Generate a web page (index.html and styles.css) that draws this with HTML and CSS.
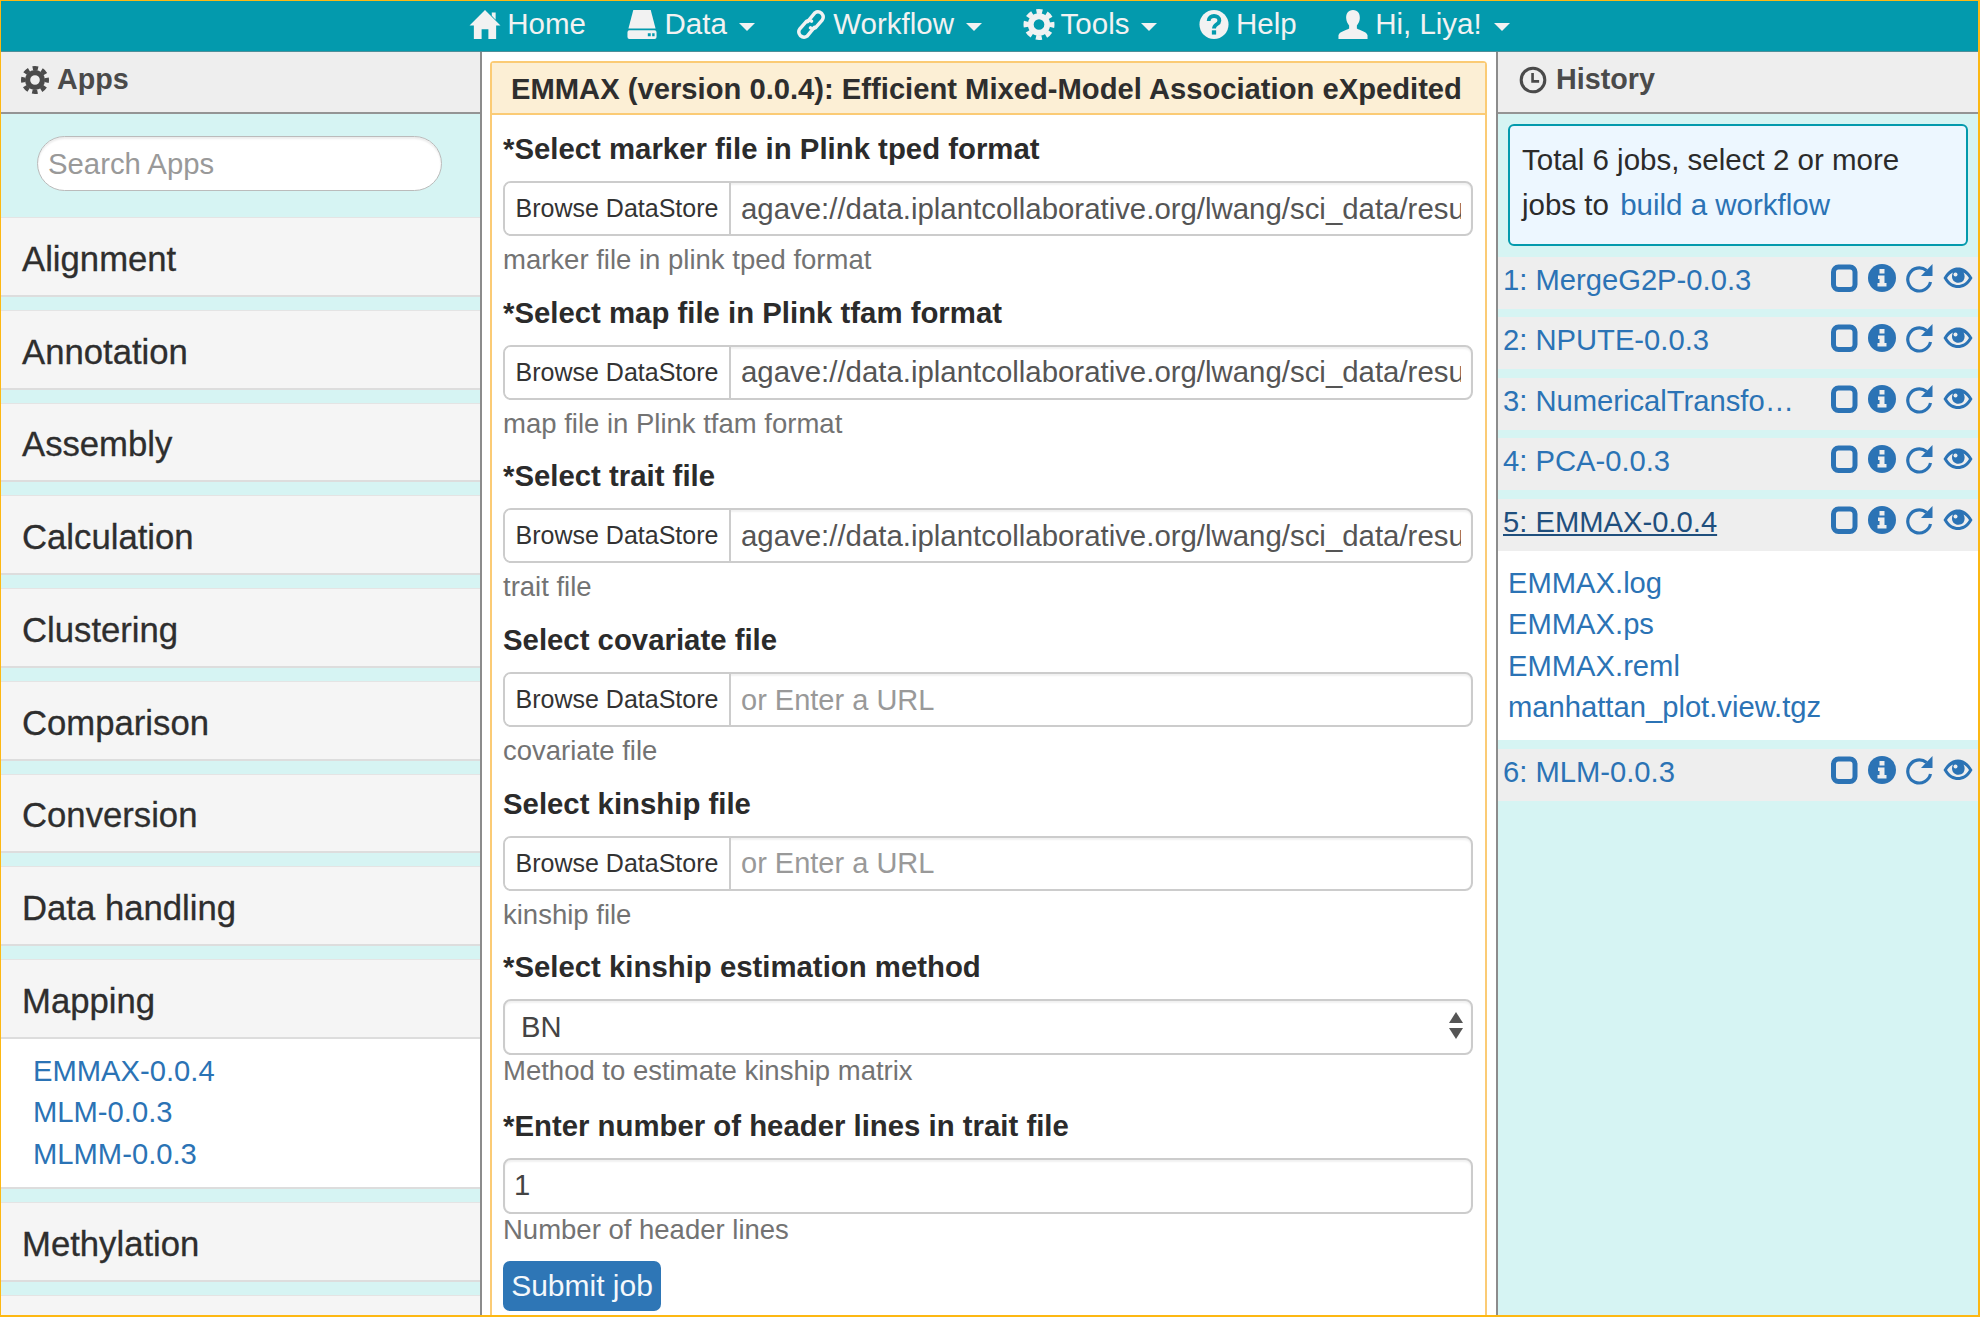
FILE: index.html
```html
<!DOCTYPE html>
<html lang="en">

<head>
    <meta charset="UTF-8">
    <title>EMMAX</title>
    <link rel="stylesheet" href="styles.css">
</head>

<body>
    <svg class="sprite" xmlns="http://www.w3.org/2000/svg">
        <symbol id="i-home" viewBox="0 0 32 32">
            <path d="M16 1 L32 17 H27.500 V31 H19.500 V21 H12.500 V31 H4.500 V17 H0 Z M23 3.500 H27 V11 L23 7 Z" fill="currentColor" />
        </symbol>
        <symbol id="i-hdd" viewBox="0 0 32 32">
            <path d="M7 1 H25 L30 20 H2 Z" fill="currentColor" />
            <path fill-rule="evenodd" fill="currentColor" d="M3 22 H29 Q31 22 31 24 V29 Q31 31 29 31 H3 Q1 31 1 29 V24 Q1 22 3 22 Z M22 25 V28 H25 V25 Z M26.500 25 V28 H29 V25 Z" />
        </symbol>
        <symbol id="i-link" viewBox="0 0 32 32">
            <g fill="none" stroke="currentColor" stroke-width="3.500" stroke-linecap="round">
                <path d="M12.500 13 L20 4 Q23.500 1.500 27 4.500 Q30 8 27.500 11.500 L20.500 19.500 Q18 21 15.500 19.500" />
                <path d="M19.500 19 L12 28 Q8.500 30.500 5 27.500 Q2 24 4.500 20.500 L11.500 12.500 Q14 11 16.500 12.500" />
            </g>
        </symbol>
        <symbol id="i-cog" viewBox="0 0 32 32">
            <circle cx="16" cy="16" r="13.500" fill="none" stroke="currentColor" stroke-width="5" stroke-dasharray="6.100 4.500" stroke-dashoffset="3.050" />
            <circle cx="16" cy="16" r="8.500" fill="none" stroke="currentColor" stroke-width="6" />
        </symbol>
        <symbol id="i-question" viewBox="0 0 32 32">
            <circle cx="16" cy="16" r="15" fill="currentColor" />
            <path d="M10.500 12.500 C10.500 5.500 21.500 5.500 21.500 12 C21.500 16 16 15.500 16 20" fill="none" stroke="#039aad" stroke-width="4" />
            <rect x="13.800" y="22" width="4.400" height="4.400" fill="#039aad" />
        </symbol>
        <symbol id="i-user" viewBox="0 0 32 32">
            <path d="M16 1 C21 1 23.500 5 23 10 C22.700 13 21.500 15 20 17 V20 C23 22 30 23 31 27 V31 H1 V27 C2 23 9 22 12 20 V17 C10.500 15 9.300 13 9 10 C8.500 5 11 1 16 1 Z" fill="currentColor" />
        </symbol>
        <symbol id="i-clock" viewBox="0 0 32 32">
            <circle cx="16" cy="16" r="13.500" fill="none" stroke="currentColor" stroke-width="3.500" />
            <path d="M15.500 8 V17.500 H23" fill="none" stroke="currentColor" stroke-width="3" />
        </symbol>
        <symbol id="i-square" viewBox="0 0 30 30">
            <rect x="4.500" y="4" width="21.500" height="22.500" rx="5" fill="none" stroke="currentColor" stroke-width="5" />
        </symbol>
        <symbol id="i-info" viewBox="0 0 30 30">
            <circle cx="15" cy="15" r="14" fill="currentColor" />
            <path d="M12.500 6 H17.500 V10.500 H12.500 Z M11 12.500 H17.500 V20 H19.500 V23.500 H10.500 V20 H12.500 V16 H11 Z" fill="#eee" />
        </symbol>
        <symbol id="i-repeat" viewBox="0 0 30 30">
            <path d="M25.500 19 A11.500 11.500 0 1 1 21.500 7.500" fill="none" stroke="currentColor" stroke-width="3.200" />
            <path d="M27.500 1 V13 H16 Z" fill="currentColor" />
        </symbol>
        <symbol id="i-eye" viewBox="0 0 30 30">
            <path fill-rule="evenodd" fill="currentColor" d="M0.500 15 C5 7 10 4.500 15 4.500 C20 4.500 25 7 29.500 15 C25 23 20 25 15 25 C10 25 5 23 0.500 15 Z M4 15 C7 20 11 22 15 22 C19 22 23 20 26 15 C24.500 12.500 22.500 10.500 20.500 9.500 C22 12 22 15 20.500 17.500 C18.500 20 14 20.500 11.500 18.500 C8.500 16.500 8.500 12 10 9.500 C7.500 10.500 5.500 12.500 4 15 Z" />
            <circle cx="12.500" cy="11.500" r="2" fill="#eee" />
        </symbol>
    </svg>

    <div class="frame">
        <nav class="navbar">
            <a class="nav-item"><svg class="nav-icon"><use href="#i-home" /></svg>Home</a>
            <a class="nav-item"><svg class="nav-icon"><use href="#i-hdd" /></svg>Data<span class="caret"></span></a>
            <a class="nav-item"><svg class="nav-icon"><use href="#i-link" /></svg>Workflow<span class="caret"></span></a>
            <a class="nav-item"><svg class="nav-icon"><use href="#i-cog" /></svg>Tools<span class="caret"></span></a>
            <a class="nav-item"><svg class="nav-icon"><use href="#i-question" /></svg>Help</a>
            <a class="nav-item"><svg class="nav-icon"><use href="#i-user" /></svg>Hi, Liya!<span class="caret"></span></a>
        </nav>

        <div class="columns">
            <aside class="apps">
                <h2 class="col-head"><svg class="head-icon"><use href="#i-cog" /></svg>Apps</h2>
                <div class="search-wrap">
                    <input class="search" type="text" placeholder="Search Apps">
                </div>
                <div class="panel">Alignment</div>
                <div class="panel">Annotation</div>
                <div class="panel">Assembly</div>
                <div class="panel">Calculation</div>
                <div class="panel">Clustering</div>
                <div class="panel">Comparison</div>
                <div class="panel">Conversion</div>
                <div class="panel">Data handling</div>
                <div class="panel panel-open">Mapping</div>
                <ul class="app-list">
                    <li><a>EMMAX-0.0.4</a></li>
                    <li><a>MLM-0.0.3</a></li>
                    <li><a>MLMM-0.0.3</a></li>
                </ul>
                <div class="panel">Methylation</div>
                <div class="panel"></div>
            </aside>

            <main class="center">
                <div class="job-panel">
                    <h1 class="job-title">EMMAX (version 0.0.4): Efficient Mixed-Model Association eXpedited</h1>
                    <form class="job-form">
                        <div class="field">
                            <label>*Select marker file in Plink tped format</label>
                            <div class="input-group">
                                <button type="button" class="browse">Browse DataStore</button>
                                <input type="text" value="agave://data.iplantcollaborative.org/lwang/sci_data/results/emmax/marker.tped">
                            </div>
                            <p class="help">marker file in plink tped format</p>
                        </div>
                        <div class="field">
                            <label>*Select map file in Plink tfam format</label>
                            <div class="input-group">
                                <button type="button" class="browse">Browse DataStore</button>
                                <input type="text" value="agave://data.iplantcollaborative.org/lwang/sci_data/results/emmax/marker.tfam">
                            </div>
                            <p class="help">map file in Plink tfam format</p>
                        </div>
                        <div class="field">
                            <label>*Select trait file</label>
                            <div class="input-group">
                                <button type="button" class="browse">Browse DataStore</button>
                                <input type="text" value="agave://data.iplantcollaborative.org/lwang/sci_data/results/emmax/trait.txt">
                            </div>
                            <p class="help">trait file</p>
                        </div>
                        <div class="field">
                            <label>Select covariate file</label>
                            <div class="input-group">
                                <button type="button" class="browse">Browse DataStore</button>
                                <input type="text" placeholder="or Enter a URL">
                            </div>
                            <p class="help">covariate file</p>
                        </div>
                        <div class="field">
                            <label>Select kinship file</label>
                            <div class="input-group">
                                <button type="button" class="browse">Browse DataStore</button>
                                <input type="text" placeholder="or Enter a URL">
                            </div>
                            <p class="help">kinship file</p>
                        </div>
                        <div class="field field-short">
                            <label>*Select kinship estimation method</label>
                            <div class="select-wrap">
                                <select class="control control-select">
                                    <option>BN</option>
                                </select>
                                <span class="arrows"></span>
                            </div>
                            <p class="help help-tight">Method to estimate kinship matrix</p>
                        </div>
                        <div class="field field-short">
                            <label>*Enter number of header lines in trait file</label>
                            <input class="control" type="text" value="1">
                            <p class="help help-tight">Number of header lines</p>
                        </div>
                        <button type="button" class="submit">Submit job</button>
                    </form>
                </div>
            </main>

            <aside class="history">
                <h2 class="col-head"><svg class="head-icon clock"><use href="#i-clock" /></svg>History</h2>
                <div class="notice">Total 6 jobs, select 2 or more<br>jobs to <a>build a workflow</a></div>

                <div class="job">
                    <a class="job-name">1: MergeG2P-0.0.3</a>
                    <div class="job-actions">
                        <svg><use href="#i-square" /></svg>
                        <svg><use href="#i-info" /></svg>
                        <svg><use href="#i-repeat" /></svg>
                        <svg><use href="#i-eye" /></svg>
                    </div>
                </div>
                <div class="job">
                    <a class="job-name">2: NPUTE-0.0.3</a>
                    <div class="job-actions">
                        <svg><use href="#i-square" /></svg>
                        <svg><use href="#i-info" /></svg>
                        <svg><use href="#i-repeat" /></svg>
                        <svg><use href="#i-eye" /></svg>
                    </div>
                </div>
                <div class="job">
                    <a class="job-name">3: NumericalTransfo…</a>
                    <div class="job-actions">
                        <svg><use href="#i-square" /></svg>
                        <svg><use href="#i-info" /></svg>
                        <svg><use href="#i-repeat" /></svg>
                        <svg><use href="#i-eye" /></svg>
                    </div>
                </div>
                <div class="job">
                    <a class="job-name">4: PCA-0.0.3</a>
                    <div class="job-actions">
                        <svg><use href="#i-square" /></svg>
                        <svg><use href="#i-info" /></svg>
                        <svg><use href="#i-repeat" /></svg>
                        <svg><use href="#i-eye" /></svg>
                    </div>
                </div>
                <div class="job job-open">
                    <a class="job-name active">5: EMMAX-0.0.4</a>
                    <div class="job-actions">
                        <svg><use href="#i-square" /></svg>
                        <svg><use href="#i-info" /></svg>
                        <svg><use href="#i-repeat" /></svg>
                        <svg><use href="#i-eye" /></svg>
                    </div>
                </div>
                <ul class="job-files">
                    <li><a>EMMAX.log</a></li>
                    <li><a>EMMAX.ps</a></li>
                    <li><a>EMMAX.reml</a></li>
                    <li><a>manhattan_plot.view.tgz</a></li>
                </ul>
                <div class="job">
                    <a class="job-name">6: MLM-0.0.3</a>
                    <div class="job-actions">
                        <svg><use href="#i-square" /></svg>
                        <svg><use href="#i-info" /></svg>
                        <svg><use href="#i-repeat" /></svg>
                        <svg><use href="#i-eye" /></svg>
                    </div>
                </div>
            </aside>
        </div>
    </div>
</body>

</html>
```

FILE: styles.css
```css
* {
    margin: 0;
    padding: 0;
    box-sizing: border-box;
}

html,
body {
    height: 1317px;
    overflow: hidden;
}

body {
    font-family: "Liberation Sans", Arial, sans-serif;
    font-size: 29.2px;
    color: #333;
    background: #fff;
}

a {
    color: #2b73b5;
}

ul {
    list-style: none;
}

.sprite {
    display: none;
}

.frame {
    height: 1317px;
    display: flex;
    flex-direction: column;
    border-style: solid;
    border-color: #fdb813;
    border-width: 1px 2px 2px 1px;
}

/* top bar */
.navbar {
    height: 51px;
    flex: none;
    display: flex;
    justify-content: center;
    align-items: center;
    gap: 40.5px;
    background: #039aad;
    border-bottom: 1px solid #4f8f99;
}

.nav-item {
    display: flex;
    align-items: center;
    color: #f2f2f2;
    font-size: 29.5px;
    padding-bottom: 4px;
}

.nav-icon {
    width: 32px;
    height: 31px;
    margin-right: 6px;
}

.caret {
    width: 0;
    height: 0;
    margin-left: 12px;
    margin-top: 5px;
    border-left: 8px solid transparent;
    border-right: 8px solid transparent;
    border-top: 8px solid #f2f2f2;
}

.columns {
    flex: 1;
    display: flex;
    min-height: 0;
}

/* side columns */
.apps,
.history {
    flex: none;
    height: 100%;
    overflow: hidden;
    background: #d6f4f3;
}

.apps {
    width: 481px;
    border-right: 2px solid #8c8c8c;
}

.history {
    width: 482px;
    border-left: 2px solid #8c8c8c;
}

.col-head {
    height: 62px;
    display: flex;
    align-items: center;
    padding: 0 0 5px 20px;
    background: #eee;
    border-bottom: 2px solid #949494;
    font-size: 28.7px;
    font-weight: bold;
    color: #4a4a4a;
}

.history .col-head {
    padding-left: 21px;
}

.head-icon {
    width: 28px;
    height: 28px;
    margin-right: 8px;
}

.clock {
    margin-right: 9px;
}

.search-wrap {
    height: 103px;
    padding: 22px 38px 0 36px;
}

.search {
    width: 100%;
    height: 55px;
    padding: 0 10px;
    border: 1px solid #bbb;
    border-radius: 28px;
    box-shadow: inset 0 2px 2px rgba(0, 0, 0, .08);
    font: inherit;
    font-size: 29.3px;
    outline: none;
}

.search::placeholder,
.input-group input::placeholder {
    color: #999;
    opacity: 1;
}

.input-group input::placeholder {
    font-size: 29px;
}

.panel {
    height: 79.75px;
    margin-bottom: 13px;
    display: flex;
    align-items: center;
    padding: 6px 0 0 21px;
    background: #f5f5f5;
    border-top: 1px solid #e4e4e4;
    border-bottom: 2px solid #ddd;
    font-size: 34.7px;
    color: #2e2e2e;
    -webkit-text-stroke: .3px #2e2e2e;
}

.panel-open {
    margin-bottom: 0;
}

.app-list {
    height: 150px;
    margin-bottom: 13px;
    padding: 12px 0 0 32px;
    background: #fff;
    border-bottom: 2px solid #ddd;
    line-height: 41.5px;
}

/* middle form */
.center {
    flex: 1;
    min-width: 0;
    height: 100%;
    padding: 9px 9px 0 8px;
    overflow: hidden;
}

.job-panel {
    height: 1400px;
    border: 2px solid #fbcb75;
    border-radius: 4px 4px 0 0;
}

.job-title {
    height: 52px;
    padding: 3px 0 0 19px;
    display: flex;
    align-items: center;
    background: #fcefd5;
    border-bottom: 2px solid #fbcb75;
    font-size: 29.2px;
    font-weight: bold;
    color: #2e2e2e;
    white-space: nowrap;
}

.job-form {
    padding: 16px 12px 0 11px;
}

.field {
    margin-bottom: 16.7px;
}

.field label {
    display: block;
    height: 36px;
    margin-bottom: 14px;
    line-height: 36px;
    font-size: 29.35px;
    font-weight: bold;
    color: #2b2b2b;
}

.input-group {
    height: 55px;
    display: flex;
    border: 2px solid #ccc;
    border-radius: 8px;
    overflow: hidden;
    box-shadow: inset 0 2px 2px rgba(0, 0, 0, .06);
}

.browse {
    flex: none;
    width: 226px;
    border: none;
    border-right: 2px solid #ccc;
    background: #fff;
    font-family: inherit;
    font-size: 25px;
    color: #333;
}

.input-group input {
    flex: 1;
    min-width: 0;
    border: none;
    padding: 0 10px;
    outline: none;
    font: inherit;
    font-size: 29.4px;
    color: #555;
    background: transparent;
}

.help {
    height: 36px;
    margin-top: 6px;
    line-height: 36px;
    font-size: 27.5px;
    color: #737373;
}

.help-tight {
    height: 32px;
    margin-top: 0;
    line-height: 32px;
}

.field-short {
    margin-bottom: 20.5px;
}

.select-wrap {
    position: relative;
}

.control {
    display: block;
    width: 100%;
    height: 56px;
    padding: 0 9px;
    border: 2px solid #ccc;
    border-radius: 8px;
    background: #fff;
    box-shadow: inset 0 2px 2px rgba(0, 0, 0, .06);
    font: inherit;
    color: #444;
    outline: none;
    appearance: none;
}

.control-select {
    padding: 0 16px;
}

.arrows {
    position: absolute;
    right: 10px;
    top: 13px;
    width: 14px;
    height: 27px;
}

.arrows::before,
.arrows::after {
    content: "";
    position: absolute;
    left: 0;
    border-left: 7px solid transparent;
    border-right: 7px solid transparent;
}

.arrows::before {
    top: 0;
    border-bottom: 11px solid #555;
}

.arrows::after {
    bottom: 0;
    border-top: 11px solid #555;
}

.submit {
    display: block;
    width: 158px;
    height: 50px;
    margin-top: -5.5px;
    border: none;
    border-radius: 7px;
    background: #2e76b6;
    color: #f4f8fb;
    font-family: inherit;
    font-size: 30px;
}

/* history */
.notice {
    height: 122px;
    margin: 10px 10px 11px 10px;
    padding: 11px 18px 0 12px;
    background: #edf7ff;
    border: 2px solid #039aad;
    border-radius: 6px;
    line-height: 45px;
    font-size: 29.5px;
    color: #2b2b2b;
}

.notice a {
    margin-left: 3px;
}

.job {
    height: 52px;
    margin-bottom: 8.4px;
    display: flex;
    justify-content: space-between;
    padding: 0 5px 0 5px;
    background: #eee;
}

.job-open {
    margin-bottom: 0;
}

.job-name {
    line-height: 47px;
    white-space: nowrap;
}

.job-name.active {
    color: #1f4f7d;
    text-decoration: underline;
}

.job-actions {
    display: flex;
    gap: 8px;
    padding-top: 6px;
    color: #2b73b5;
}

.job-actions svg {
    width: 30px;
    height: 30px;
}

.job-files {
    height: 189px;
    margin-bottom: 9px;
    padding: 12px 0 0 10px;
    background: #fff;
    line-height: 41.5px;
}
```
